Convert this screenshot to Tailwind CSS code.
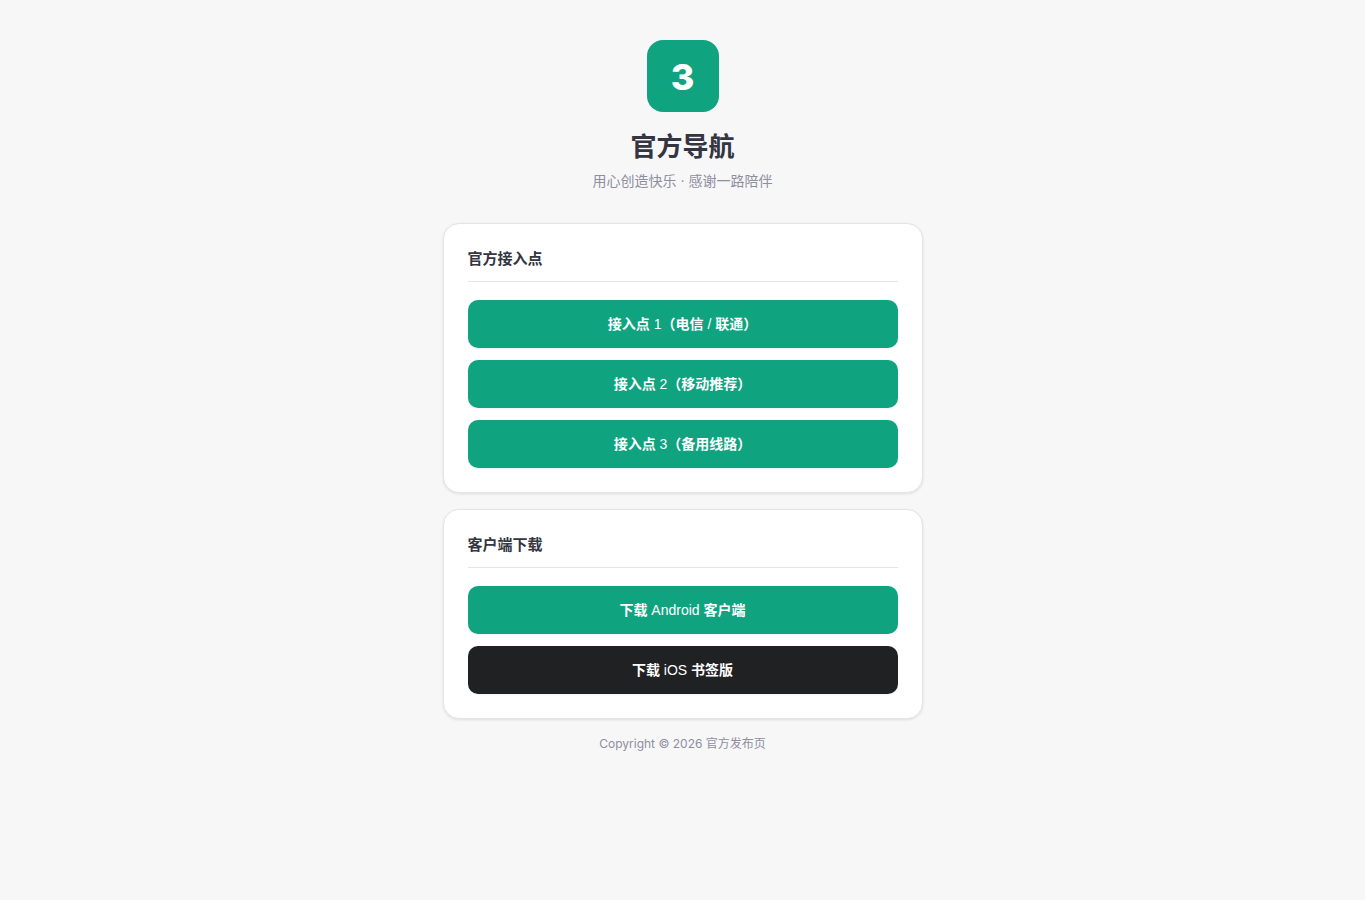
<!DOCTYPE html>
<html lang="zh-CN">
<head>
  <meta charset="UTF-8" />
  <meta name="viewport" content="width=device-width, initial-scale=1.0"/>
  <title>官方导航</title>
  <script src="https://cdn.jsdelivr.net/npm/@tailwindcss/browser@4"></script>
</head>
<body class="bg-[#f7f7f8] text-[#343541] min-h-screen px-5 py-10 font-['Inter','Noto_Sans_CJK_SC',sans-serif]">

  <div class="w-full max-w-[480px] mx-auto">

    <header class="text-center mb-8">
      <div class="w-18 h-18 mx-auto mb-4 pt-0.5 rounded-2xl bg-[#10a37f] text-white text-4xl font-extrabold flex items-center justify-center">3</div>
      <h1 class="text-[26px] leading-[38px] font-bold">官方导航</h1>
      <p class="mt-1 text-sm leading-[21px] text-[#8e8ea0]">用心创造快乐 · 感谢一路陪伴</p>
    </header>

    <main class="space-y-4">
      <section class="bg-white border border-[#e5e5e5] rounded-2xl shadow-[0_1px_3px_rgba(0,0,0,0.1)] p-6">
        <h2 class="text-[15px] leading-[21px] font-semibold pb-3 mb-[18px] border-b border-[#e5e5e5]">官方接入点</h2>
        <div class="flex flex-col gap-3 font-['Liberation_Sans','Noto_Sans_CJK_SC',sans-serif]">
          <button type="button" class="h-12 w-full rounded-[10px] shadow-xs bg-[#10a37f] hover:bg-[#0d8c6d] text-white text-sm font-semibold">接入点 <span class="font-normal">1</span>（电信 <span class="font-normal">/</span> 联通）</button>
          <button type="button" class="h-12 w-full rounded-[10px] shadow-xs bg-[#10a37f] hover:bg-[#0d8c6d] text-white text-sm font-semibold">接入点 <span class="font-normal">2</span>（移动推荐）</button>
          <button type="button" class="h-12 w-full rounded-[10px] shadow-xs bg-[#10a37f] hover:bg-[#0d8c6d] text-white text-sm font-semibold">接入点 <span class="font-normal">3</span>（备用线路）</button>
        </div>
      </section>

      <section class="bg-white border border-[#e5e5e5] rounded-2xl shadow-[0_1px_3px_rgba(0,0,0,0.1)] p-6">
        <h2 class="text-[15px] leading-[21px] font-semibold pb-3 mb-[18px] border-b border-[#e5e5e5]">客户端下载</h2>
        <div class="flex flex-col gap-3 font-['Liberation_Sans','Noto_Sans_CJK_SC',sans-serif]">
          <button type="button" class="h-12 w-full rounded-[10px] shadow-xs bg-[#10a37f] hover:bg-[#0d8c6d] text-white text-sm font-semibold">下载 <span class="font-normal">Android</span> 客户端</button>
          <button type="button" class="h-12 w-full rounded-[10px] shadow-xs bg-[#202123] hover:bg-black text-white text-sm font-semibold">下载 <span class="font-normal">iOS</span> 书签版</button>
        </div>
      </section>
    </main>

    <footer class="mt-4 text-center text-xs leading-[18px] text-[#8e8ea0]">Copyright © 2026 官方发布页</footer>
  </div>

</body>
</html>
